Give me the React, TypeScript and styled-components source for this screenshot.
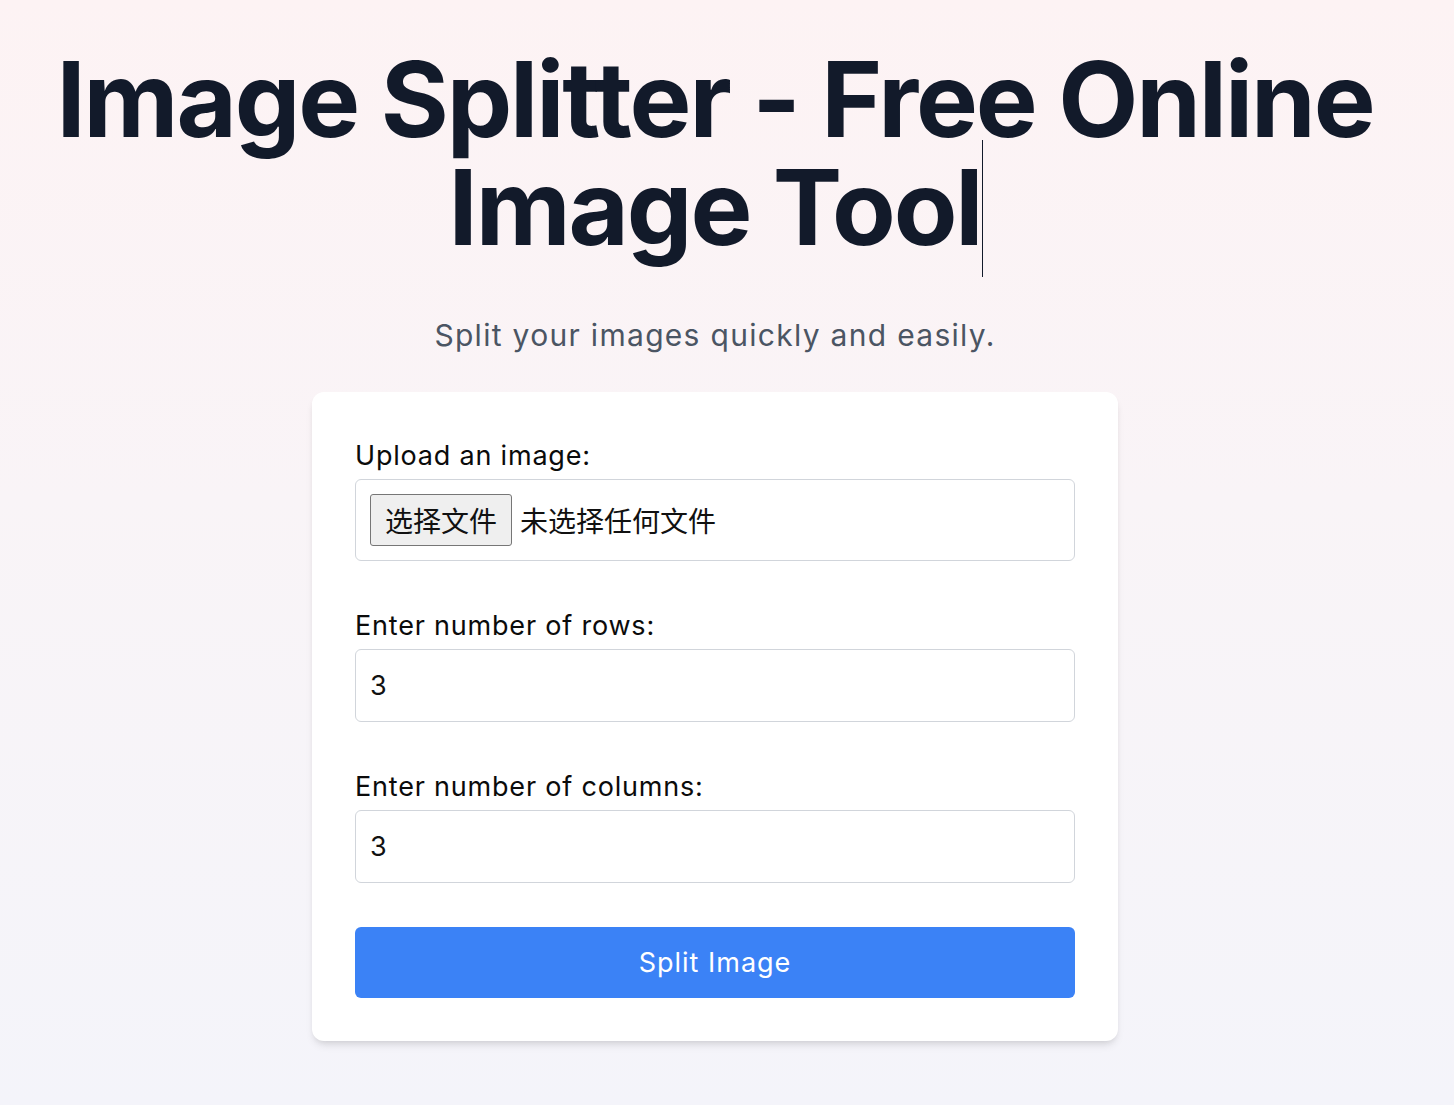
import React, { useState } from 'react';
import styled, { createGlobalStyle } from 'styled-components';

const GlobalStyle = createGlobalStyle`
  html, body {
    margin: 0;
    padding: 0;
  }
  body {
    font-family: Inter, "Noto Sans", "Noto Sans CJK SC", sans-serif;
    background: linear-gradient(to bottom, #fdf3f4 0%, #f9f4f7 45%, #f4f4fa 100%);
    min-height: 100vh;
  }
`;

const Page = styled.main`
  min-height: 1105px;
  display: flex;
  flex-direction: column;
  align-items: center;
  padding: 45px 24px 0 0;
  box-sizing: border-box;
`;

const Title = styled.h1`
  margin: 0;
  max-width: 1400px;
  font-size: 104px;
  line-height: 108px;
  font-weight: 700;
  letter-spacing: -2.1px;
  color: #121a2a;
  text-align: center;
`;

// text cursor left after "Tool"
const Caret = styled.span`
  display: inline-block;
  position: relative;
  width: 0;
  height: 1px;

  &::after {
    content: '';
    position: absolute;
    left: 1px;
    bottom: -32px;
    height: 137px;
    border-left: 1px solid #121a2a;
  }
`;

const Subtitle = styled.p`
  margin: 52px 0 0;
  font-size: 30px;
  line-height: 45px;
  letter-spacing: 1.3px;
  color: #4b5563;
  text-align: center;
`;

const Card = styled.form`
  margin-top: 34px;
  width: 806px;
  box-sizing: border-box;
  padding: 46px 43px 43px;
  background: #ffffff;
  border-radius: 12px;
  box-shadow: 0 6px 9px -2px rgba(0, 0, 0, 0.1), 0 3px 6px -3px rgba(0, 0, 0, 0.1);
  display: flex;
  flex-direction: column;
`;

const Field = styled.div<{ $gap?: number }>`
  display: flex;
  flex-direction: column;
  margin-bottom: ${(p) => p.$gap ?? 47}px;
`;

const Label = styled.label`
  font-size: 27px;
  line-height: 36px;
  letter-spacing: 0.8px;
  color: #0b0b0b;
  margin-bottom: 5px;
`;

const FileBox = styled.div`
  display: flex;
  align-items: center;
  gap: 8px;
  height: 82px;
  box-sizing: border-box;
  padding: 0 14px;
  border: 1px solid #d1d5db;
  border-radius: 6px;
  font-family: "Noto Sans CJK SC", sans-serif;
  font-size: 28px;
  color: #111;
`;

const FileButton = styled.button`
  height: 52px;
  padding: 0 14px;
  font-family: "Noto Sans CJK SC", sans-serif;
  font-size: 28px;
  color: #111;
  background: #efefef;
  border: 1px solid #767676;
  border-radius: 3px;
`;

const NumberInput = styled.input`
  height: 73px;
  box-sizing: border-box;
  padding: 0 14px;
  border: 1px solid #d1d5db;
  border-radius: 6px;
  font-family: Inter, sans-serif;
  font-size: 27px;
  color: #111;
  outline: none;
`;

const SubmitButton = styled.button`
  height: 71px;
  border: none;
  border-radius: 6px;
  background: #3b82f6;
  color: #ffffff;
  font-family: Inter, sans-serif;
  font-size: 27px;
  letter-spacing: 1px;
  cursor: pointer;
`;

const App: React.FC = () => {
  const [rows, setRows] = useState('3');
  const [cols, setCols] = useState('3');

  return (
    <>
      <GlobalStyle />
      <Page>
        <Title>
          Image Splitter - Free Online Image Tool
          <Caret />
        </Title>
        <Subtitle>Split your images quickly and easily.</Subtitle>

        <Card onSubmit={(e) => e.preventDefault()}>
          <Field>
            <Label>Upload an image:</Label>
            <FileBox>
              <FileButton type="button">选择文件</FileButton>
              <span>未选择任何文件</span>
            </FileBox>
          </Field>

          <Field>
            <Label>Enter number of rows:</Label>
            <NumberInput
              type="text"
              value={rows}
              onChange={(e) => setRows(e.target.value)}
            />
          </Field>

          <Field $gap={44}>
            <Label>Enter number of columns:</Label>
            <NumberInput
              type="text"
              value={cols}
              onChange={(e) => setCols(e.target.value)}
            />
          </Field>

          <SubmitButton type="submit">Split Image</SubmitButton>
        </Card>
      </Page>
    </>
  );
};

export default App;
